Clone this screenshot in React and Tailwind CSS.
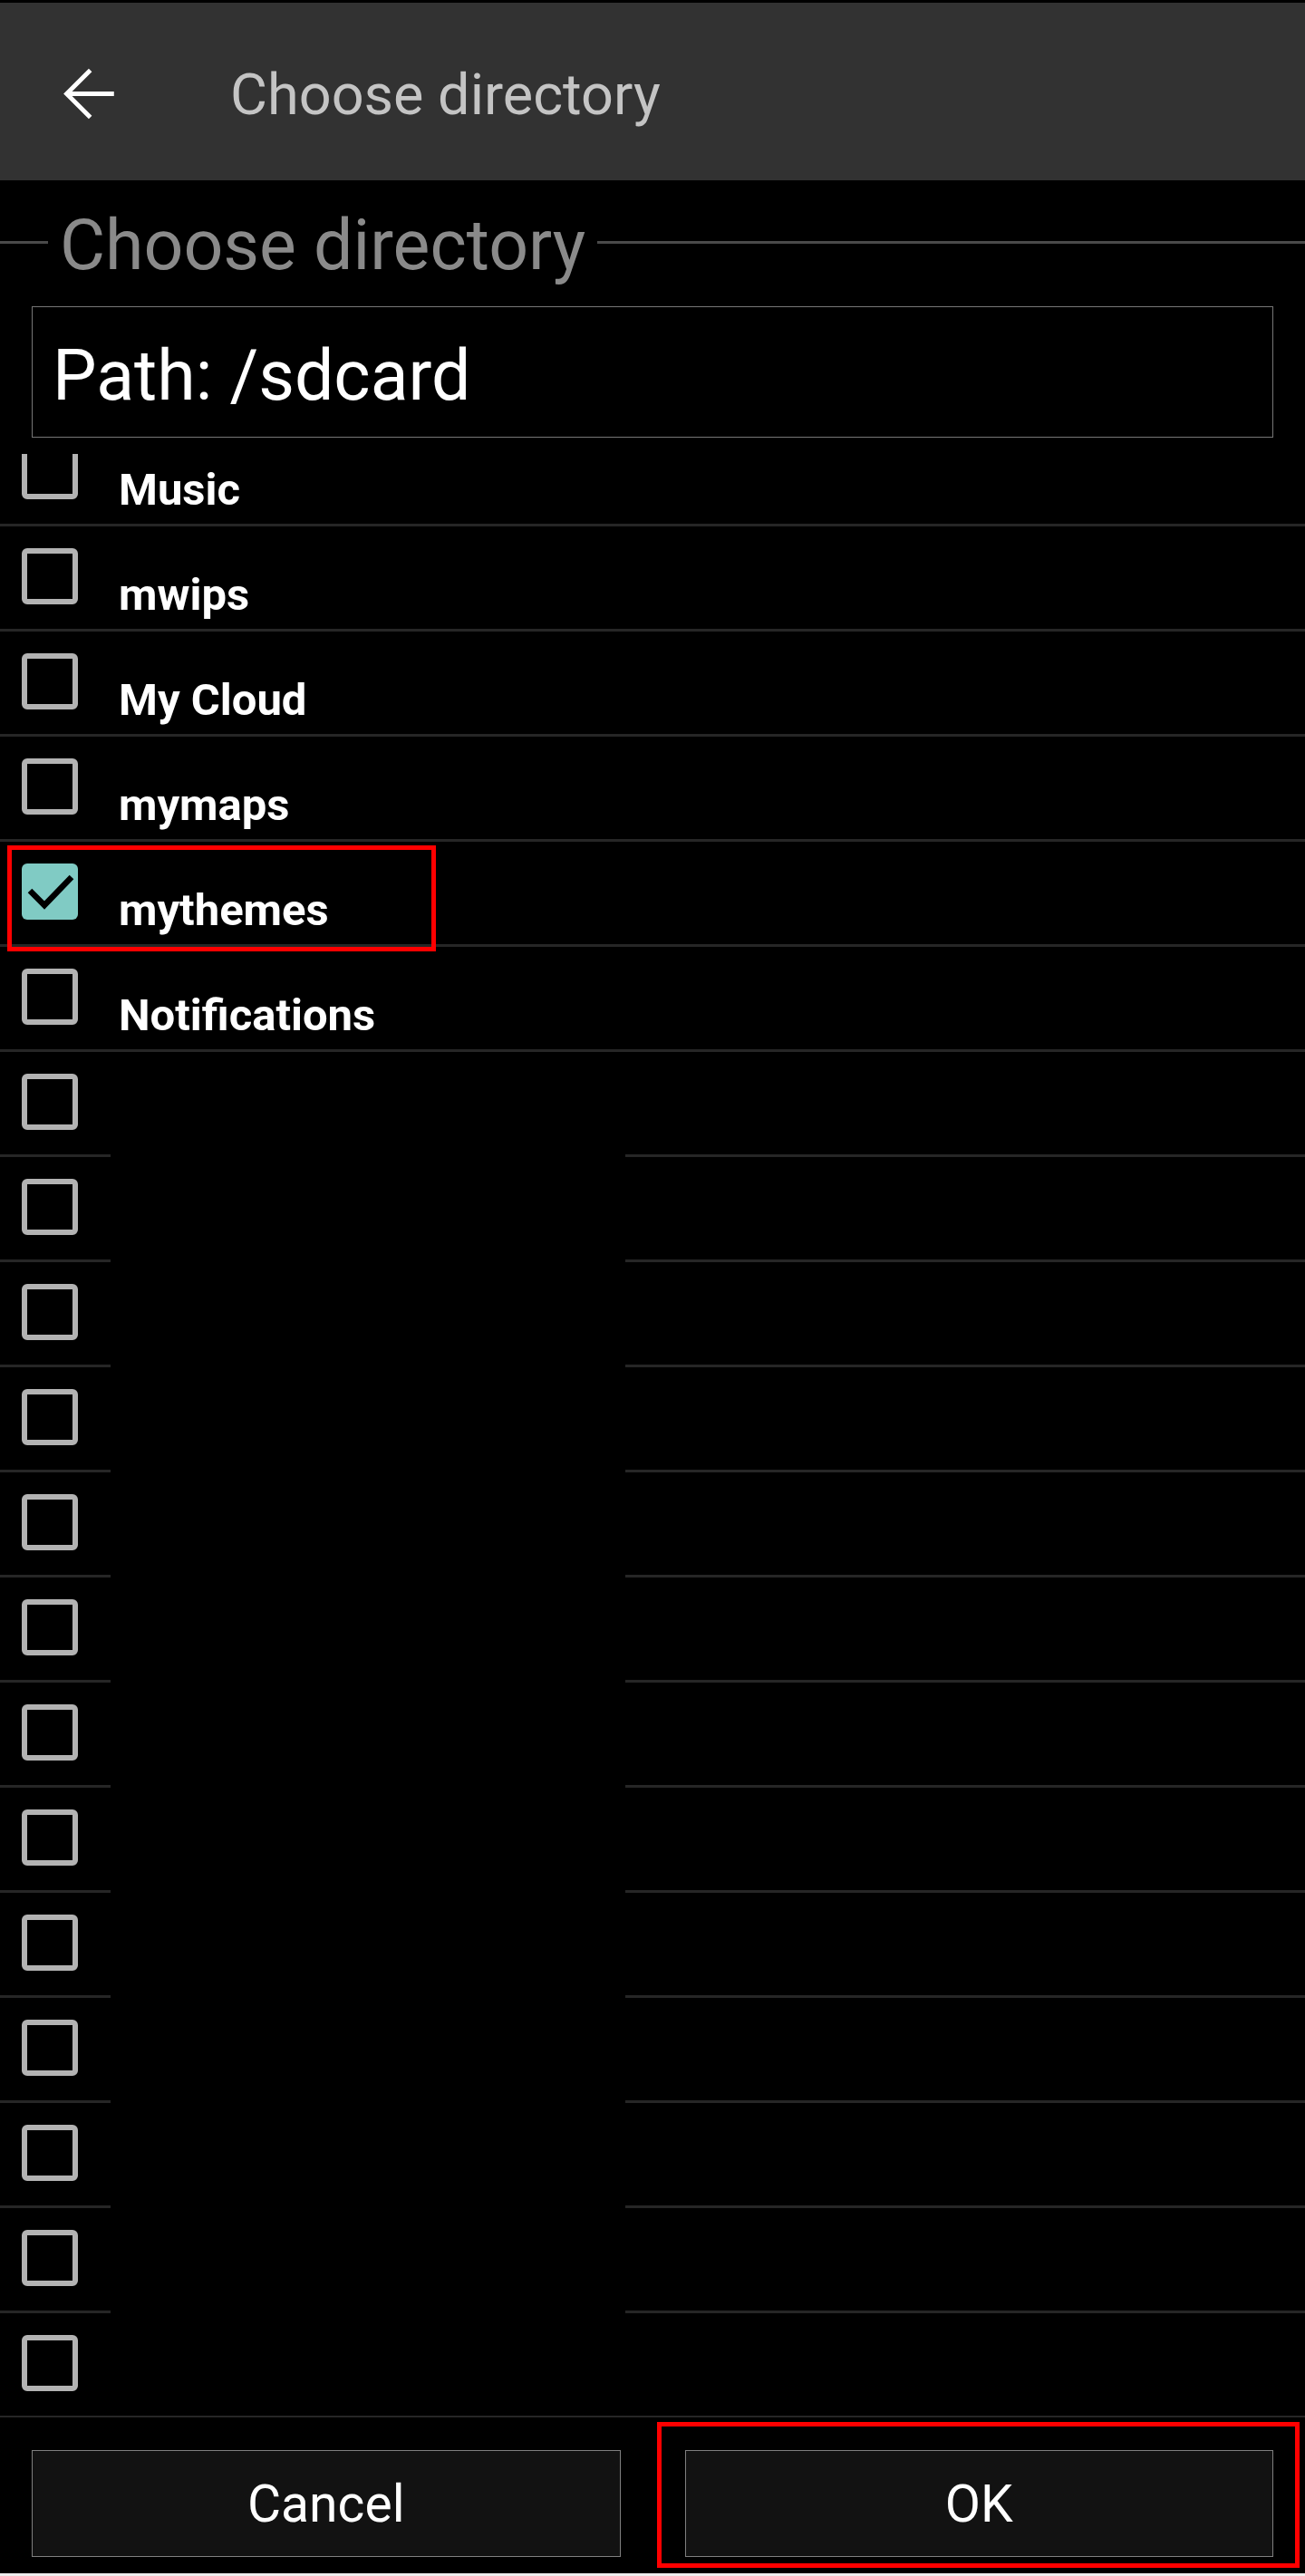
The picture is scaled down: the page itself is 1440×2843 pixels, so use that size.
import React from "react";

const labels = [
  "Music",
  "mwips",
  "My Cloud",
  "mymaps",
  "mythemes",
  "Notifications",
  "", "", "", "", "", "", "", "", "", "", "", "", "",
];

function Checkbox({ checked }) {
  if (checked) {
    return (
      <div className="w-[62px] h-[62px] rounded-[6px] bg-[#80cbc4]">
        <svg width="62" height="62" viewBox="0 0 62 62">
          <path d="M9 30 L25 46 L55 15" stroke="#000" strokeWidth="6.5" fill="none" />
        </svg>
      </div>
    );
  }
  return <div className="w-[62px] h-[62px] rounded-[6px] border-[6px] border-[#b3b3b3]" />;
}

function Row({ label, index }) {
  const gapped = index >= 6 && index <= 17;
  return (
    <div className="h-[116px] flex flex-col">
      <div className="h-[113px] flex">
        <div className="ml-[24px] mt-[24px]">
          <Checkbox checked={label === "mythemes"} />
        </div>
        <div className="ml-[45px] mt-[51px] text-[49px] leading-none font-bold text-white whitespace-nowrap">
          {label}
        </div>
      </div>
      {gapped ? (
        <div className="h-[3px] flex">
          <div className="w-[122px] bg-[#262626]" />
          <div className="ml-[568px] flex-1 bg-[#262626]" />
        </div>
      ) : (
        <div className="h-[3px] bg-[#262626]" />
      )}
    </div>
  );
}

export default function App() {
  return (
    <div className="relative w-[1440px] h-[2843px] bg-black overflow-hidden font-[Roboto,sans-serif] flex flex-col">
      <div className="h-[3px] bg-black" />
      {/* Header */}
      <div className="h-[196px] bg-[#323232] flex items-start">
        <div className="ml-[54px] mt-[57px] w-[87px] h-[87px]">
          <svg width="87" height="87" viewBox="0 0 24 24">
            <path
              d="M19.8 12H5.2 M12.6 4.8 L5.4 12 L12.6 19.2"
              stroke="#ffffff"
              strokeWidth="1.35"
              fill="none"
            />
          </svg>
        </div>
        <div className="ml-[113px] mt-[70px] text-[63px] leading-none text-[#c4c4c4] whitespace-nowrap">
          Choose directory
        </div>
      </div>

      {/* Fieldset legend row */}
      <div className="mt-[34px] flex items-start">
        <div className="mt-[33px] w-[53px] h-[3px] bg-[#4a4a4a]" />
        <div className="px-[13px] text-[77px] leading-none text-[#8a8a8a] whitespace-nowrap">
          Choose directory
        </div>
        <div className="mt-[33px] flex-1 h-[3px] bg-[#4a4a4a]" />
      </div>

      {/* Path box */}
      <div className="mt-[28px] mx-[35px] h-[145px] border border-[#777777]">
        <div className="pl-[22px] pt-[38px] text-[77px] leading-none text-white whitespace-nowrap">
          Path: /sdcard
        </div>
      </div>

      {/* List */}
      <div className="mt-[18px] h-[2168px] overflow-hidden">
        <div className="mt-[-36px] flex flex-col">
          {labels.map((l, i) => (
            <Row key={i} label={l} index={i} />
          ))}
        </div>
      </div>

      {/* Buttons */}
      <div className="h-[172px] flex gap-[71px] px-[35px] pt-[36px]">
        <div className="w-[650px] h-[118px] bg-[#121212] border border-[#7f7f7f] flex items-center justify-center text-[57px] text-white leading-none">
          Cancel
        </div>
        <div className="w-[650px] h-[118px] bg-[#121212] border border-[#7f7f7f] flex items-center justify-center text-[57px] text-white leading-none">
          OK
        </div>
      </div>
      <div className="h-[3px] bg-[#eeeeee]" />

      {/* Annotation overlays */}
      <div className="absolute left-[8px] top-[933px] w-[473px] h-[117px] border-[5px] border-[#ff0000]" />
      <div className="absolute left-[725px] top-[2673px] w-[709px] h-[161px] border-[5px] border-[#ff0000]" />
    </div>
  );
}
